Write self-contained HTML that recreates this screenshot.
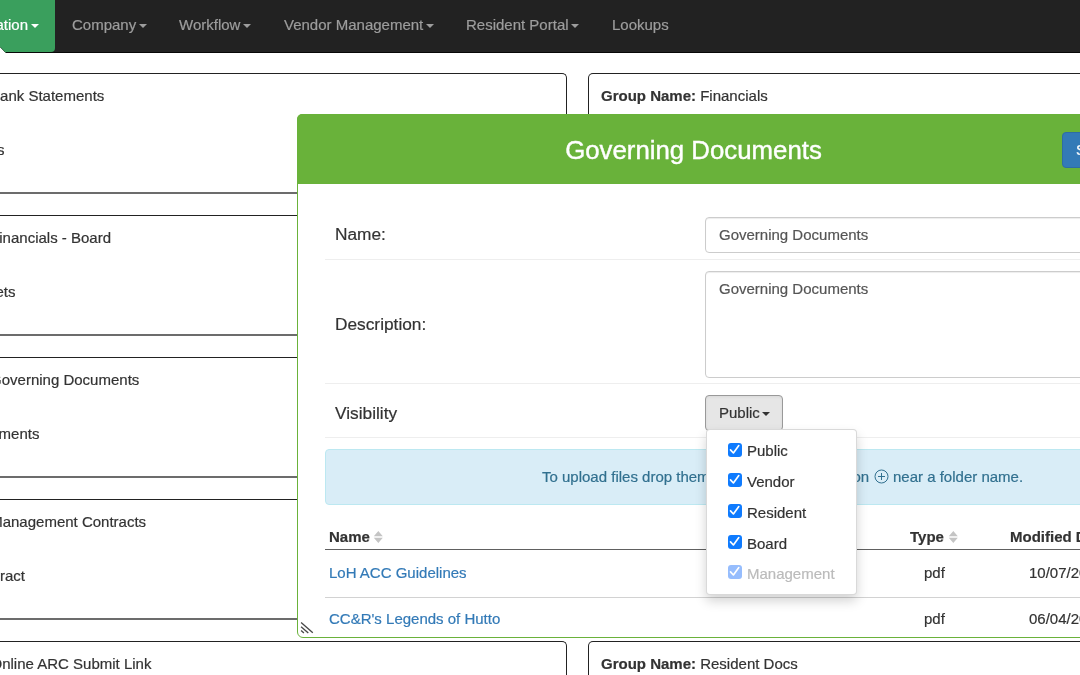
<!DOCTYPE html>
<html><head><meta charset="utf-8">
<style>
*{box-sizing:border-box;margin:0;padding:0}
html,body{width:1080px;height:675px;overflow:hidden;background:#fff;font-family:"Liberation Sans",sans-serif;font-size:15px;color:#333;-webkit-text-stroke:0.2px}
.abs{position:absolute}
#nav{left:0;top:0;width:1080px;height:53px;background:#222;border-bottom:1px solid #080808}
#nav .it{position:absolute;top:0;height:51px;line-height:49px;color:#9d9d9d;font-size:15px;white-space:nowrap}
.caret{display:inline-block;width:0;height:0;margin-left:2.5px;vertical-align:middle;border-top:4px solid;border-right:4px solid transparent;border-left:4px solid transparent}
#act{left:-10px;top:0;width:65.4px;height:52px;background:#3a9f5d;border-radius:0 0 4px 0}

.box{position:absolute;border:1px solid #222;border-bottom:2px solid #6c6c6c;border-radius:5px;background:#fff}
.lt{position:absolute;font-size:15px;color:#333;white-space:nowrap}
#modal{left:297px;top:114px;width:800px;height:523.5px;background:#fff;border:1px solid #6ab23a;border-radius:6px;overflow:visible}
#mh{left:297px;top:114px;width:800px;height:70px;background:#69b23a;border-radius:5px 5px 0 0}
#title{left:297px;top:116px;width:793px;height:70px;line-height:69px;text-align:center;color:#fff;font-size:25.8px;-webkit-text-stroke:0.4px #fff}
.lbl{position:absolute;left:335px;font-size:17.3px;color:#333;white-space:nowrap}
.sep{position:absolute;left:325px;width:760px;height:1px;background:#eee}
.inp{position:absolute;left:705px;width:400px;border:1px solid #ccc;border-radius:4px;background:#fff;font-size:15px;color:#555;padding-left:13px;box-shadow:inset 0 1px 1px rgba(0,0,0,.075)}
.th{position:absolute;top:528.3px;font-weight:bold;font-size:15px;color:#333;white-space:nowrap}
.td{position:absolute;font-size:15px;color:#333;white-space:nowrap}
a{color:#337ab7;text-decoration:none}
.cb{position:absolute;left:728px;width:14px;height:14px;border-radius:3px;background:#0f7bfe}
.cb svg{position:absolute;left:0;top:0}
.cl{position:absolute;left:747px;font-size:15px;color:#333}
</style></head><body><div id="root" style="position:absolute;left:0;top:0;width:1080px;height:675px;will-change:transform">
<div id="nav" class="abs">
 <div id="act" class="abs"></div>
 <svg class="abs" style="left:0;top:46px" width="8" height="8"><path d="M0 0.8 L6 7 L0 7 Z" fill="#fff"/><path d="M0 0.8 L5.6 6.6" stroke="#1d4f2e" stroke-width="0.8" fill="none"/></svg>
 <div class="it" style="left:-4.5px;color:#fff">ation<span class="caret"></span></div>
 <div class="it" style="left:72px">Company<span class="caret"></span></div>
 <div class="it" style="left:179px">Workflow<span class="caret"></span></div>
 <div class="it" style="left:284px">Vendor Management<span class="caret"></span></div>
 <div class="it" style="left:466px">Resident Portal<span class="caret"></span></div>
 <div class="it" style="left:612px">Lookups</div>
</div>

<!-- left boxes -->
<div class="box" style="left:-10px;top:73px;width:577px;height:121px"></div>
<div class="box" style="left:-10px;top:215px;width:577px;height:121px"></div>
<div class="box" style="left:-10px;top:357px;width:577px;height:121px"></div>
<div class="box" style="left:-10px;top:499px;width:577px;height:121px"></div>
<div class="box" style="left:-10px;top:641px;width:577px;height:121px"></div>
<div class="lt" style="right:975.7px;top:87px">Bank Statements</div>
<div class="lt" style="right:1075.6px;top:141px">s</div>
<div class="lt" style="right:969.0px;top:229px">Financials - Board</div>
<div class="lt" style="right:1064.6px;top:283px">gets</div>
<div class="lt" style="right:940.7px;top:371px">Governing Documents</div>
<div class="lt" style="right:1040.6px;top:425px">uments</div>
<div class="lt" style="right:933.9px;top:513px">Management Contracts</div>
<div class="lt" style="right:1055.1px;top:567px">ntract</div>
<div class="lt" style="right:928.6px;top:655px">Online ARC Submit Link</div>

<!-- right boxes -->
<div class="box" style="left:588px;top:73px;width:520px;height:121px"></div>
<div class="lt" style="left:601px;top:87px"><b>Group Name:</b> Financials</div>
<div class="box" style="left:588px;top:641px;width:520px;height:121px"></div>
<div class="lt" style="left:601px;top:655px"><b>Group Name:</b> Resident Docs</div>

<!-- modal -->
<div id="modal" class="abs"></div>
<div id="mh" class="abs"></div>
<div id="title" class="abs">Governing Documents</div>
<div class="abs" style="left:1062px;top:132px;width:60px;height:36px;background:#337ab7;border:1px solid #2e6da4;border-radius:4px;color:#fff;font-size:15px;line-height:34px;padding-left:13px">Save</div>

<div class="lbl" style="top:223.5px">Name:</div>
<div class="inp" style="top:217px;height:36px;line-height:34px">Governing Documents</div>
<div class="sep" style="top:259px"></div>
<div class="lbl" style="top:313.5px">Description:</div>
<div class="inp" style="top:271px;height:107px;line-height:34px">Governing Documents</div>
<div class="sep" style="top:383px"></div>
<div class="lbl" style="top:402.5px">Visibility</div>
<div class="abs" style="left:705px;top:395px;width:78px;height:36px;background:#e6e6e6;border:1px solid #999;border-radius:4px;font-size:15px;color:#333;line-height:34px;padding-left:13px;box-shadow:inset 0 1px 3px rgba(0,0,0,.06)">Public<span class="caret" style="margin-left:2px"></span></div>
<div class="sep" style="top:437px"></div>

<div class="abs" style="left:325px;top:449px;width:780px;height:56px;background:#d9edf7;border:1px solid #bce8f1;border-radius:4px"></div>
<div class="abs" style="left:542px;top:467.5px;font-size:15px;color:#31708f;white-space:nowrap">To upload files drop them here</div>
<div class="abs" style="right:210.8px;top:467.5px;font-size:15px;color:#31708f;white-space:nowrap">button</div>
<svg class="abs" style="left:874px;top:469px" width="15" height="15" viewBox="0 0 15 15"><circle cx="7.5" cy="7.5" r="6.5" fill="none" stroke="#31708f" stroke-width="1"/><path d="M4 7.5H11M7.5 4V11" stroke="#31708f" stroke-width="1" fill="none"/></svg>
<div class="abs" style="left:893px;top:467.5px;font-size:15px;color:#31708f;white-space:nowrap">near a folder name.</div>

<div class="th" style="left:329px">Name</div>
<div class="th" style="left:910px">Type</div>
<svg class="abs" style="left:374px;top:531px;overflow:visible" width="10" height="13" viewBox="0 0 10 13"><path d="M-0.2 5.3 L4.3 0.1 L8.8 5.3 Z M-0.2 6.7 L8.8 6.7 L4.3 12 Z" fill="#c4c4c4"/></svg><svg class="abs" style="left:949px;top:531px;overflow:visible" width="10" height="13" viewBox="0 0 10 13"><path d="M-0.2 5.3 L4.3 0.1 L8.8 5.3 Z M-0.2 6.7 L8.8 6.7 L4.3 12 Z" fill="#c4c4c4"/></svg>
<div class="th" style="left:1010px">Modified Date</div>
<div class="abs" style="left:325px;top:549px;width:780px;height:1px;background:#606060"></div>
<div class="td" style="left:329px;top:564px"><a>LoH ACC Guidelines</a></div>
<div class="td" style="left:924px;top:564px">pdf</div>
<div class="td" style="left:1029px;top:564px">10/07/2020</div>
<div class="abs" style="left:325px;top:597px;width:780px;height:1px;background:#d2d2d2"></div>
<div class="td" style="left:329px;top:610px"><a>CC&amp;R's Legends of Hutto</a></div>
<div class="td" style="left:924px;top:610px">pdf</div>
<div class="td" style="left:1029px;top:610px">06/04/2020</div>

<svg class="abs" style="left:299px;top:620px" width="16" height="16" viewBox="0 0 16 16"><path d="M2.1 2.4L13.8 12.8M2.1 6.7L9.3 13.1M2.1 10.6L4.9 13.1" stroke="#4a4a4a" stroke-width="1.35" fill="none"/></svg>
<!-- dropdown -->
<div class="abs" style="left:706px;top:429px;width:151px;height:166px;background:#fff;border:1px solid rgba(0,0,0,.15);border-radius:4px;box-shadow:0 6px 12px rgba(0,0,0,.175)"></div>
<div class="cb" style="top:442.7px"><svg width="14" height="14" viewBox="0 0 14 14"><path d="M2.5 6.9 L5.4 10 L10.8 2.6" fill="none" stroke="#fff" stroke-width="1.65" stroke-linecap="round" stroke-linejoin="round"/></svg></div><div class="cl" style="top:442px">Public</div>
<div class="cb" style="top:473.3px"><svg width="14" height="14" viewBox="0 0 14 14"><path d="M2.5 6.9 L5.4 10 L10.8 2.6" fill="none" stroke="#fff" stroke-width="1.65" stroke-linecap="round" stroke-linejoin="round"/></svg></div><div class="cl" style="top:473px">Vendor</div>
<div class="cb" style="top:504px"><svg width="14" height="14" viewBox="0 0 14 14"><path d="M2.5 6.9 L5.4 10 L10.8 2.6" fill="none" stroke="#fff" stroke-width="1.65" stroke-linecap="round" stroke-linejoin="round"/></svg></div><div class="cl" style="top:504px">Resident</div>
<div class="cb" style="top:534.7px"><svg width="14" height="14" viewBox="0 0 14 14"><path d="M2.5 6.9 L5.4 10 L10.8 2.6" fill="none" stroke="#fff" stroke-width="1.65" stroke-linecap="round" stroke-linejoin="round"/></svg></div><div class="cl" style="top:534.7px">Board</div>
<div class="cb" style="top:565.3px;background:#96bdfd"><svg width="14" height="14" viewBox="0 0 14 14"><path d="M2.5 6.9 L5.4 10 L10.8 2.6" fill="none" stroke="#fff" stroke-width="1.65" stroke-linecap="round" stroke-linejoin="round"/></svg></div><div class="cl" style="top:565px;color:#bbb">Management</div>
</div></body></html>
